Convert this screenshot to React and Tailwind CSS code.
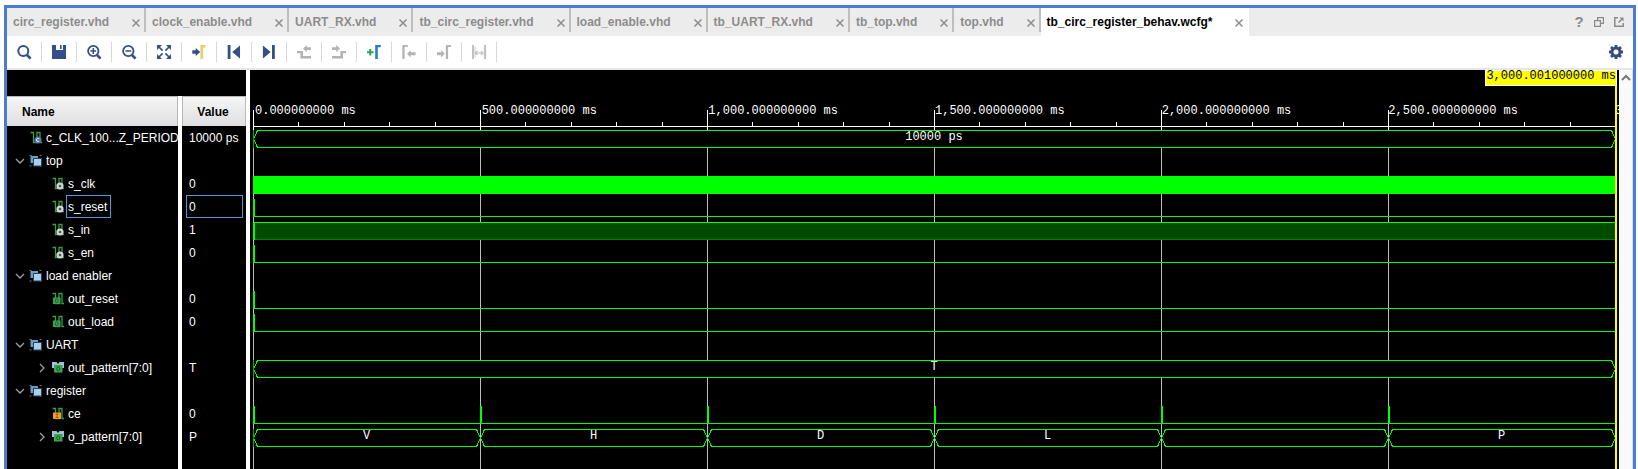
import React from "react";

const NAVY = "#334f85";
const GREY = "#b4b4b4";
const GREEN = "#00ff00";

const tabs = [
  "circ_register.vhd",
  "clock_enable.vhd",
  "UART_RX.vhd",
  "tb_circ_register.vhd",
  "load_enable.vhd",
  "tb_UART_RX.vhd",
  "tb_top.vhd",
  "top.vhd",
  "tb_circ_register_behav.wcfg*",
];

const tools = [
  {
    label: "Find",
    art: (
      <g fill="none" stroke={NAVY}>
        <circle cx="7.3" cy="7" r="5" strokeWidth="2" />
        <path d="M11 11l3.6 3.6" strokeWidth="2.6" />
      </g>
    ),
  },
  {
    label: "Save",
    art: <path d="M1 1h4v5h7V1h3v14H1zM9 1h1.6v4H9z" fill={NAVY} />,
  },
  {
    label: "Zoom In",
    art: (
      <g fill="none" stroke={NAVY}>
        <circle cx="7.3" cy="7" r="5.2" strokeWidth="1.8" />
        <path d="M11 11l3.6 3.6" strokeWidth="2.6" />
        <path d="M4.4 7h5.8M7.3 4.1v5.8" strokeWidth="1.5" />
      </g>
    ),
  },
  {
    label: "Zoom Out",
    art: (
      <g fill="none" stroke={NAVY}>
        <circle cx="7.3" cy="7" r="5.2" strokeWidth="1.8" />
        <path d="M11 11l3.6 3.6" strokeWidth="2.6" />
        <path d="M4.4 7h5.8" strokeWidth="1.5" />
      </g>
    ),
  },
  {
    label: "Zoom Fit",
    art: (
      <g fill={NAVY} stroke={NAVY} strokeWidth="1.7">
        <path d="M1 1h5L1 6zM15 1h-5l5 5zM1 15h5l-5-5zM15 15h-5l5-5z" stroke="none" />
        <path d="M3 3l3.6 3.6M13 3L9.4 6.6M3 13l3.6-3.6M13 13L9.4 9.4" />
      </g>
    ),
  },
  {
    label: "Go to Cursor",
    art: (
      <g>
        <path d="M1.3 6.2h3.4V4l4.6 4-4.6 4V9.8H1.3z" fill={NAVY} />
        <path d="M9.4 1h5.2v2.4h-2.4V15H9.4z" fill="#e8cf6e" />
      </g>
    ),
  },
  {
    label: "Go to Time 0",
    art: <path d="M1.7 1h2.8v14H1.7zM14 1.4v13.2L6.2 8z" fill={NAVY} />,
  },
  {
    label: "Go to Last Time",
    art: <path d="M11 1h2.8v14H11zM1.9 1.4v13.2L9.7 8z" fill={NAVY} />,
  },
  {
    label: "Previous Transition",
    art: (
      <g fill={GREY}>
        <path d="M1 7h6v5h8v2.4H4.4V9.2H1z" />
        <path d="M7 4.6L10.8 1v2.2H15V6h-4.200v2.200z" />
      </g>
    ),
  },
  {
    label: "Next Transition",
    art: (
      <g fill={GREY}>
        <path d="M15 7H9.4v5H1v2.4h11V9.2h3z" />
        <path d="M9 4.6L5.200 1v2.200H1V6h4.200v2.200z" />
      </g>
    ),
  },
  {
    label: "Add Marker",
    art: (
      <g>
        <path d="M3.200 5h2v2.200h2.300v2H5.200v2.200h-2V9.200H1v-2h2.200z" fill="#2fa84f" />
        <path d="M9.200 1h5.600v2.200h-3V15H9.200z" fill="#2a7fb8" />
      </g>
    ),
  },
  {
    label: "Previous Marker",
    art: (
      <g fill={GREY}>
        <path d="M1.300 1h5.400v2H3.600v12H1.300z" />
        <path d="M6 9.800l3.600-3.800v2.300h5v3H9.600v2.300z" />
      </g>
    ),
  },
  {
    label: "Next Marker",
    art: (
      <g fill={GREY}>
        <path d="M9.800 1h5.200v2h-2.900v12H9.800z" />
        <path d="M8.800 9.800L5.200 6v2.300H1v3h4.200v2.300z" />
      </g>
    ),
  },
  {
    label: "Swap Cursors",
    art: (
      <g fill="none" stroke="#c0c0c0">
        <path d="M2 1v14" strokeWidth="2" />
        <path d="M4 2.500v11" strokeWidth="0.800" />
        <path d="M14 1v14" strokeWidth="2.200" />
        <path d="M4.500 9h7.500M6.500 7L4.500 9l2 2M10 7l2 2-2 2" strokeWidth="1.200" />
      </g>
    ),
  },
];

const rows = [
  { name: "c_CLK_100...Z_PERIOD", value: "10000 ps", icon: "const", level: 1, wave: "bus", labels: ["10000 ps"] },
  { name: "top", icon: "group", level: 1, open: true },
  { name: "s_clk", value: "0", icon: "signal", level: 2, wave: "solid" },
  { name: "s_reset", value: "0", icon: "signal", level: 2, wave: "pulse", selected: true },
  { name: "s_in", value: "1", icon: "signal", level: 2, wave: "dense" },
  { name: "s_en", value: "0", icon: "signal", level: 2, wave: "pulse" },
  { name: "load enabler", icon: "group", level: 1, open: true },
  { name: "out_reset", value: "0", icon: "out", level: 2, wave: "pulse" },
  { name: "out_load", value: "0", icon: "out", level: 2, wave: "pulse" },
  { name: "UART", icon: "group", level: 1, open: true },
  { name: "out_pattern[7:0]", value: "T", icon: "bus", level: 2, open: false, wave: "bus", labels: ["T"] },
  { name: "register", icon: "group", level: 1, open: true },
  { name: "ce", value: "0", icon: "in", level: 2, wave: "pulses" },
  { name: "o_pattern[7:0]", value: "P", icon: "bus", level: 2, open: false, wave: "bus", labels: ["V", "H", "D", "L", "", "P"] },
];

const times = ["0", "500", "1,000", "1,500", "2,000", "2,500"];

function SignalIcon({ kind }) {
  if (kind === "group") {
    return (
      <svg viewBox="0 0 13 13" className="size-[13px] shrink-0" aria-hidden="true">
        <path d="M0.500 1.500h2M10.500 1.500h2M0.500 12h2M10.500 12h2" stroke="#777" />
        <rect x="1.500" y="2" width="7.500" height="7" fill="#6f9cbf" />
        <rect x="4.500" y="4.500" width="8" height="7.500" fill="#a8d0ea" stroke="#24455f" />
      </svg>
    );
  }
  if (kind === "bus") {
    return (
      <svg viewBox="0 0 13 13" className="size-[13px] shrink-0" aria-hidden="true">
        <path d="M1 1h4.500l1.500 2 1.500-2H13v6H1z" fill="#9cc3d8" />
        <rect x="3" y="4" width="8.500" height="7.500" fill="#3fa34d" />
        <ellipse cx="7.200" cy="7.800" rx="1.500" ry="2" fill="none" stroke="#175f25" />
      </svg>
    );
  }
  return (
    <svg viewBox="0 0 13 13" className="size-[13px] shrink-0" aria-hidden="true">
      <path d="M1.500 1.500h3v10h3.500v-10h3v10h2" fill="none" stroke="#35a047" strokeWidth="1.300" />
      {kind === "signal" && (
        <g>
          <circle cx="9" cy="9" r="3.600" fill="#d4d4d4" />
          <circle cx="9" cy="9" r="1.300" fill="#555" />
        </g>
      )}
      {kind === "const" && (
        <g>
          <circle cx="9" cy="9" r="3.600" fill="#5a74a8" />
          <path d="M10.200 7.900a1.600 1.600 0 1 0 0 2.200" fill="none" stroke="#e6ecf8" />
        </g>
      )}
      {kind === "out" && (
        <g>
          <rect x="2" y="5.500" width="7.500" height="6.500" fill="#3fa34d" />
          <ellipse cx="5.700" cy="8.700" rx="1.400" ry="1.900" fill="none" stroke="#175f25" />
        </g>
      )}
      {kind === "in" && (
        <g>
          <rect x="2" y="5.500" width="8" height="6.500" fill="#f79a2e" />
          <path d="M4.500 7h3M6 7v3.500M4.500 10.500h3" fill="none" stroke="#a85a08" />
        </g>
      )}
    </svg>
  );
}

function Toggle({ row }) {
  if (row.open === undefined) return <span className="w-2.5 shrink-0" />;
  return (
    <button
      type="button"
      aria-expanded={row.open}
      aria-label={"Toggle " + row.name}
      className="flex w-2.5 shrink-0 items-center justify-center text-[#a0a0a0]"
    >
      <svg viewBox="0 0 10 10" className="size-2.5" fill="none" stroke="currentColor" strokeWidth="1.300">
        <path d={row.open ? "M1 3l4 4 4-4" : "M3 1l4 4-4 4"} />
      </svg>
    </button>
  );
}

function NameCell({ row }) {
  return (
    <div className={"flex h-[23px] items-center overflow-hidden whitespace-nowrap " + (row.level === 1 ? "pl-2" : "pl-[30px]")}>
      <Toggle row={row} />
      <span className="ml-1 flex">
        <SignalIcon kind={row.icon} />
      </span>
      <span
        className={
          "ml-0.5 flex h-[23px] items-center border pr-[3px] pl-px " +
          (row.selected ? "border-[#4a9ae0]" : "border-transparent")
        }
      >
        {row.name}
      </span>
    </div>
  );
}

function ValueCell({ row }) {
  return (
    <div
      className={
        "mr-[3px] ml-1 flex h-[23px] items-center border pl-0.5 whitespace-nowrap " +
        (row.selected ? "border-[#4a9ae0]" : "border-transparent")
      }
    >
      {row.value}
    </div>
  );
}

function hexPath(start, end) {
  return `M${start + 0.5} 12L${start + 4.5} 3.5H${end - 3.5}L${end + 0.5} 12L${end - 3.5} 20.5H${start + 4.5}Z`;
}

function Wave({ row }) {
  const n = row.labels ? row.labels.length : 0;
  return (
    <div className="relative h-[23px]">
      {row.wave === "bus" && (
        <svg
          viewBox="0 0 1362 23"
          preserveAspectRatio="none"
          className="absolute inset-0 size-full"
          shapeRendering="crispEdges"
        >
          {row.labels.map((_, i) => (
            <path
              key={i}
              d={hexPath((1362 / n) * i, (1362 / n) * (i + 1))}
              fill="#000"
              stroke={GREEN}
              vectorEffect="non-scaling-stroke"
            />
          ))}
          <path d="M0.500 3v18" stroke="#00b000" vectorEffect="non-scaling-stroke" />
        </svg>
      )}
      {row.wave && row.wave !== "bus" && (
        <svg className="absolute inset-0 size-full" shapeRendering="crispEdges">
          {row.wave === "solid" && <rect x="0" y="3" width="100%" height="18" fill={GREEN} />}
          {row.wave === "dense" && (
            <g>
              <rect x="0" y="3" width="100%" height="18" fill="#004b00" />
              <rect x="0" y="20" width="100%" height="1" fill="#008000" />
              <rect x="0" y="3" width="100%" height="1" fill={GREEN} />
              <rect x="0" y="3" width="2" height="18" fill={GREEN} />
            </g>
          )}
          {(row.wave === "pulse" || row.wave === "pulses") && (
            <g fill={GREEN}>
              <rect x="0" y="20" width="100%" height="1" />
              {(row.wave === "pulse" ? [0] : [0, 1, 2, 3, 4, 5]).map((i) => (
                <rect key={i} x={`${(i * 100) / 6}%`} y="3" width="2" height="18" />
              ))}
            </g>
          )}
        </svg>
      )}
      {row.labels && (
        <div className="relative flex text-center font-['Liberation_Mono',monospace] leading-[21px] text-white">
          {row.labels.map((label, i) => (
            <span key={i} className="flex-1">
              {label}
            </span>
          ))}
        </div>
      )}
    </div>
  );
}

function Ruler() {
  return (
    <div className="relative h-[57px] border-b border-white">
      <svg className="absolute inset-0 size-full overflow-visible" shapeRendering="crispEdges" fill="#fff">
        {Array.from({ length: 30 }, (_, i) => {
          const major = i % 5 === 0;
          return <rect key={i} x={`${(i * 100) / 30}%`} y={major ? 40 : 52} width="1" height={major ? 20 : 4} />;
        })}
      </svg>
      <div className="relative flex pt-[33px] font-['Liberation_Mono',monospace] leading-4 whitespace-nowrap text-white">
        {times.map((t) => (
          <span key={t} className="flex-1 pl-0.5">
            {t}.000000000 ms
          </span>
        ))}
        <span className="w-0 pl-0.5">3,000.000000000 ms</span>
      </div>
    </div>
  );
}

export default function App() {
  return (
    <div className="flex h-screen flex-col bg-white pt-[5px] pr-0.5 pl-1 font-['Liberation_Sans',Arial,sans-serif] text-[12px] text-black">
      <div className="flex min-h-0 flex-1 flex-col border-x-[3px] border-t-[3px] border-[#4a7dd2]">
        <nav className="flex h-7 shrink-0 bg-[#ececec] font-bold text-[#8c8c8c]">
          {tabs.map((tab, i) => {
            const active = i === tabs.length - 1;
            return (
              <div key={tab} className={"flex " + (active ? "bg-white pr-0.5 text-black" : "")}>
                <div className="flex items-center gap-[23px] pr-1 pl-1.5">
                  <button type="button" className="whitespace-nowrap">
                    {tab}
                  </button>
                  <button type="button" aria-label={"Close " + tab} className="pt-0.5 text-[#8c8c8c]">
                    <svg viewBox="0 0 8 8" className="size-2" fill="none" stroke="currentColor" strokeWidth="1.500">
                      <path d="M0.500 0.500l7 7M7.500 0.500l-7 7" />
                    </svg>
                  </button>
                </div>
                {!active && <span className="h-6 w-0.5 bg-[#bebebe]" />}
              </div>
            );
          })}
          <div className="ml-auto flex items-center gap-2.5 pr-[9px] text-[#8a8a8a]">
            <button type="button" aria-label="Help" className="w-2.5 text-[15px] leading-4">
              ?
            </button>
            <button type="button" aria-label="Restore">
              <svg viewBox="0 0 10 10" className="size-2.5" fill="none" stroke="currentColor" strokeWidth="1.200">
                <path d="M3.600 3.500V0.600h5.800v5.800H6.500M0.600 3.600h5.800v5.800H0.600z" />
              </svg>
            </button>
            <button type="button" aria-label="Float">
              <svg viewBox="0 0 10 10" className="size-2.5" fill="none" stroke="currentColor" strokeWidth="1.500">
                <path d="M4 0.800H0.800v8.400h8.400V6M4.500 5.500L8 2" />
                <path d="M5.500 0.500h4v4z" fill="currentColor" stroke="none" />
              </svg>
            </button>
          </div>
        </nav>

        <div className="flex h-[34px] shrink-0 items-center border-b-2 border-[#e6e6e6] bg-white">
          {tools.map((tool) => (
            <button
              key={tool.label}
              type="button"
              aria-label={tool.label}
              className="flex h-5 w-[35px] items-center justify-center border-r border-[#d8d8d8]"
            >
              <svg viewBox="0 0 16 16" className="size-4">
                {tool.art}
              </svg>
            </button>
          ))}
          <button type="button" aria-label="Settings" className="mr-[9px] ml-auto">
            <svg viewBox="0 0 16 16" className="size-4" fill="none" stroke={NAVY}>
              <circle cx="8" cy="8" r="4" strokeWidth="3" />
              <path
                d="M8 1v3M8 12v3M1 8h3M12 8h3M3.050 3.050l2 2M10.950 10.950l2 2M12.950 3.050l-2 2M5.050 10.950l-2 2"
                strokeWidth="2.800"
              />
            </svg>
          </button>
        </div>

        <main className="flex min-h-0 flex-1">
          <div className="flex w-[239px] shrink-0 flex-col bg-black text-white">
            <div className="h-[26px] shrink-0" />
            <div className="flex min-h-0 flex-1">
              <section className="w-[171px] shrink-0">
                <h2 className="flex h-[30px] items-center border-t border-r border-[#b8b8b8] bg-linear-to-b from-[#f5f5f5] to-[#dfdfe1] pl-[15px] font-bold text-black">
                  Name
                </h2>
                {rows.map((row) => (
                  <NameCell key={row.name} row={row} />
                ))}
              </section>
              <div className="w-1 shrink-0 bg-white" />
              <section className="min-w-0 flex-1">
                <h2 className="flex h-[30px] items-center justify-center border border-b-0 border-[#b8b8b8] bg-linear-to-b from-[#f5f5f5] to-[#dfdfe1] pr-0.5 font-bold text-black">
                  Value
                </h2>
                {rows.map((row) => (
                  <ValueCell key={row.name} row={row} />
                ))}
              </section>
            </div>
          </div>
          <div className="w-1 shrink-0 bg-white" />

          <section className="relative min-w-0 flex-1 overflow-hidden bg-black pr-1 pl-[3px]">
            <div className="relative h-full">
              <svg className="absolute inset-0 size-full" shapeRendering="crispEdges" fill="#bdbdbd">
                {times.map((t, i) => (
                  <rect key={t} x={`${(i * 100) / 6}%`} y="60" width="1" height="100%" />
                ))}
              </svg>
              <Ruler />
              {rows.map((row) => (
                <Wave key={row.name} row={row} />
              ))}
            </div>
            <div className="absolute inset-y-0 right-0.5 w-0.5 bg-[#ffff00]" />
            <div className="absolute top-0 right-0.5 h-4 border border-white bg-[#ffff00] font-['Liberation_Mono',monospace] leading-[11px] whitespace-nowrap text-black">
              3,000.001000000 ms
            </div>
          </section>

          <div className="w-3.5 shrink-0 border-r border-[#dcdcdc] bg-[#fafafa]">
            <button type="button" aria-label="Scroll up" className="flex h-4 w-full items-center justify-center text-[#777]">
              <svg viewBox="0 0 10 8" className="h-2 w-2.5" fill="none" stroke="currentColor" strokeWidth="2">
                <path d="M1 6l4-4 4 4" />
              </svg>
            </button>
          </div>
        </main>
      </div>
    </div>
  );
}
